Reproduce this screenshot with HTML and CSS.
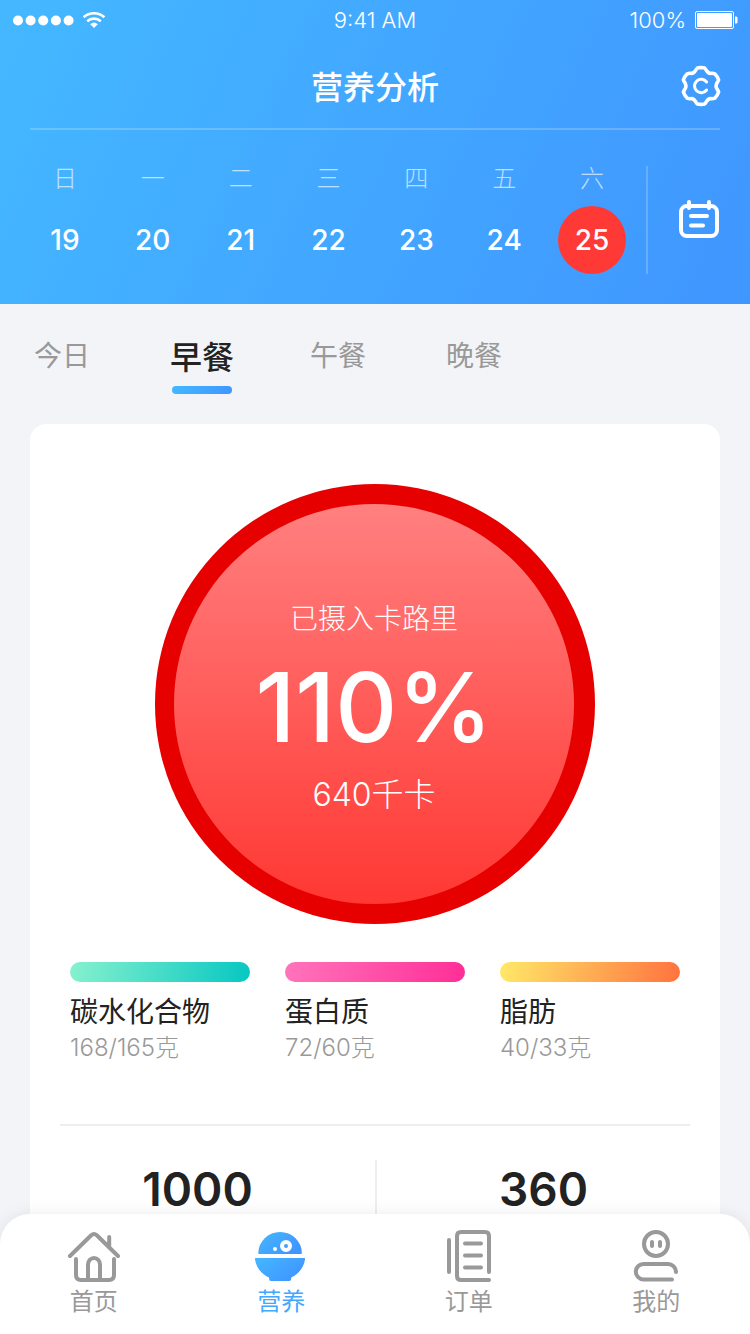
FILE: index.html
```html
<!DOCTYPE html>
<html lang="zh-CN">
<head>
<meta charset="utf-8">
<meta name="viewport" content="width=device-width, initial-scale=1">
<title>营养分析</title>
<link rel="stylesheet" href="styles.css">
</head>
<body>
<div class="app">
  <header class="header">
    <div class="status">
      <div class="status-left">
        <svg width="62" height="12" viewBox="0 0 62 12" fill="#fff" aria-hidden="true"><circle cx="6" cy="6.5" r="5"/><circle cx="18.6" cy="6.5" r="5"/><circle cx="31.2" cy="6.5" r="5"/><circle cx="43.9" cy="6.5" r="5"/><circle cx="56.6" cy="6.5" r="5"/></svg>
        <svg width="24" height="18" viewBox="0 0 24 18" aria-hidden="true"><g fill="none" stroke="#fff" stroke-width="2.6"><path d="M1.6 6.2a15.5 15.5 0 0 1 20.8 0"/><path d="M5.2 10.2a10.2 10.2 0 0 1 13.6 0"/></g><path fill="#fff" d="M8.2 13.2a5.8 5.8 0 0 1 7.6 0L12 17z"/></svg>
      </div>
      <span class="clock">9:41 AM</span>
      <div class="status-right">
        <span>100%</span>
        <svg width="44" height="18" viewBox="0 0 44 18" aria-hidden="true"><rect x="1.5" y=".5" width="38" height="17" rx="1.5" fill="none" stroke="#fff"/><rect x="3" y="2" width="35" height="14" rx="1" fill="#fff"/><path fill="#fff" d="M41 5.5h1.200q1.300 0 1.300 1.500v4q0 1.500-1.300 1.500H41z"/></svg>
      </div>
    </div>
    <div class="titlebar">
      <h1 class="title">营养分析</h1>
      <button class="icon-button settings" aria-label="设置">
        <svg width="48" height="48" viewBox="-24 -24 48 48" fill="none" stroke="#fff" stroke-width="3.6" stroke-linecap="round" stroke-linejoin="round"><path d="M-3.6-18Q-3-18.4 0-18.4T3.6-18C5.800-16 6-12.600 9.500-12.600Q12-13 13.800-12.200Q16.500-9.500 17.600-6C17.200-4 15-3 15 0S17.200 4 17.600 6Q16.500 9.500 13.800 12.200Q12 13 9.500 12.600C6 12.600 5.800 16 3.600 18Q3 18.400 0 18.400T-3.600 18C-5.800 16-6 12.600-9.500 12.600Q-12 13-13.800 12.200Q-16.500 9.500-17.600 6C-17.200 4-15 3-15 0S-17.200-4-17.600-6Q-16.500-9.500-13.800-12.200Q-12-13-9.500-12.600C-6-12.600-5.800-16-3.600-18Z"/><path stroke-width="3" d="M5.600-4A6.700 6.700 0 1 0 5.600 4"/></svg>
      </button>
    </div>
    <div class="week">
      <div class="days">
        <button class="day"><span class="day-name">日</span><span class="day-date">19</span></button>
        <button class="day"><span class="day-name">一</span><span class="day-date">20</span></button>
        <button class="day"><span class="day-name">二</span><span class="day-date">21</span></button>
        <button class="day"><span class="day-name">三</span><span class="day-date">22</span></button>
        <button class="day"><span class="day-name">四</span><span class="day-date">23</span></button>
        <button class="day"><span class="day-name">五</span><span class="day-date">24</span></button>
        <button class="day day-active"><span class="day-name">六</span><span class="day-date">25</span></button>
      </div>
      <button class="icon-button calendar" aria-label="日历">
        <svg width="40" height="40" viewBox="0 0 40 40" fill="none" stroke="#fff" stroke-width="4" stroke-linecap="round"><rect x="2" y="6" width="36" height="30" rx="6"/><path d="M10 2v6M30 2v6M12 16h16M12 25.500h12"/></svg>
      </button>
    </div>
  </header>

  <main class="content">
    <nav class="tabs">
      <button class="tab tab-first">今日</button>
      <button class="tab tab-active">早餐</button>
      <button class="tab">午餐</button>
      <button class="tab">晚餐</button>
    </nav>
    <section class="card">
      <div class="ring">
        <div class="disc">
          <span class="disc-label">已摄入卡路里</span>
          <strong class="disc-percent">110%</strong>
          <span class="disc-total">640千卡</span>
        </div>
      </div>
      <div class="nutrients">
        <div class="nutrient"><div class="bar bar-carb"></div><div class="nutrient-name">碳水化合物</div><div class="nutrient-value">168/165克</div></div>
        <div class="nutrient"><div class="bar bar-protein"></div><div class="nutrient-name">蛋白质</div><div class="nutrient-value">72/60克</div></div>
        <div class="nutrient"><div class="bar bar-fat"></div><div class="nutrient-name">脂肪</div><div class="nutrient-value">40/33克</div></div>
      </div>
      <div class="stats">
        <div class="stat">1000</div>
        <div class="stat">360</div>
      </div>
    </section>
  </main>

  <nav class="tabbar">
    <a class="tabbar-item" href="#home">
      <svg width="60" height="60" viewBox="0 0 60 60" fill="none" stroke="#999" stroke-width="4" stroke-linecap="round" stroke-linejoin="round" aria-hidden="true"><path d="M6 30 27.2 9.2Q30 6.8 32.8 9.2L54 30M45.2 11v9M12 33v16q0 5 5 5h28q5 0 5-5V33M24 54V38.500a6 6.500 0 0 1 12 0V54"/></svg>
      <span>首页</span>
    </a>
    <a class="tabbar-item tabbar-active" href="#nutrition">
      <svg width="60" height="60" viewBox="0 0 60 60" aria-hidden="true"><defs><linearGradient id="bowl" x1="0" y1="0" x2="1" y2=".6"><stop offset="0" stop-color="#44b8ff"/><stop offset="1" stop-color="#4096ff"/></linearGradient></defs><path fill="url(#bowl)" d="M8 28Q7.300 28 7.300 27.200A21.800 21.300 0 0 1 50.900 27.200Q50.900 28 50 28Z"/><path fill="url(#bowl)" d="M4.600 32H53.400Q54.300 32 54 33.500C52.500 43 46 49 40.200 51.500Q40.500 55 38.500 55H20Q18 55 18 51.500C12 49 5.500 43 4 33.500Q3.800 32 4.600 32Z"/><circle cx="35" cy="20" r="4" fill="none" stroke="#fff" stroke-width="4"/><circle cx="24" cy="23" r="2" fill="#fff"/></svg>
      <span>营养</span>
    </a>
    <a class="tabbar-item" href="#orders">
      <svg width="60" height="60" viewBox="0 0 60 60" fill="none" stroke="#999" stroke-width="4" stroke-linecap="round" stroke-linejoin="round" aria-hidden="true"><path d="M10 14v32M50 46V10q0-4-4-4H22q-4 0-4 4v40q0 4 4 4h28M26 17.500h16M26 29.500h16M26 41.500h16"/></svg>
      <span>订单</span>
    </a>
    <a class="tabbar-item" href="#mine">
      <svg width="60" height="60" viewBox="0 0 60 60" fill="none" stroke="#999" stroke-width="4" stroke-linecap="round" aria-hidden="true"><circle cx="30" cy="18" r="12"/><path d="M26 16v4M34 16v4M50 46A8 8 0 0 0 42 38H17.500a7.700 7.700 0 0 0 0 15.400H46"/></svg>
      <span>我的</span>
    </a>
  </nav>
</div>
</body>
</html>
```

FILE: styles.css
```css
* {
  box-sizing: border-box;
}

body {
  margin: 0;
  font-family: Inter, "Noto Sans CJK SC", sans-serif;
  color: #222;
  background: #f3f4f7;
}

button {
  padding: 0;
  border: 0;
  background: none;
  font: inherit;
  color: inherit;
  cursor: pointer;
}

svg {
  display: block;
}

.app {
  display: flex;
  flex-direction: column;
  height: 100vh;
}

/* Header */
.header {
  flex: none;
  color: #fff;
  background: linear-gradient(115deg, #44b8ff, #4096ff);
}

.status {
  display: grid;
  grid-template-columns: 1fr auto 1fr;
  align-items: center;
  height: 40px;
  padding: 0 12px;
  font-size: 22px;
  font-weight: 300;
}

.status-left,
.status-right {
  display: flex;
  align-items: center;
  gap: 8px;
}

.status-right {
  justify-content: flex-end;
}

.titlebar {
  display: grid;
  grid-template-columns: 48px 1fr 48px;
  align-items: center;
  height: 90px;
  margin: 0 30px;
  padding-top: 4px;
  border-bottom: 2px solid rgba(255, 255, 255, 0.2);
}

.title {
  grid-column: 2;
  margin: 0;
  padding-top: 4px;
  font-size: 32px;
  font-weight: 500;
  line-height: 48px;
  text-align: center;
}

.icon-button {
  display: flex;
  align-items: center;
  justify-content: center;
}

.settings {
  justify-content: flex-end;
  margin-right: -5px;
}

.week {
  display: flex;
  padding: 36px 0 30px 21px;
}

.days {
  flex: 1;
  display: grid;
  grid-template-columns: repeat(7, 1fr);
  padding-right: 10px;
  border-right: 2px solid rgba(255, 255, 255, 0.2);
}

.day {
  display: flex;
  flex-direction: column;
  align-items: center;
  gap: 14px;
}

.day-name {
  font-size: 24px;
  font-weight: 300;
  line-height: 26px;
  opacity: 0.65;
}

.day-date {
  width: 68px;
  border-radius: 50%;
  font-size: 28px;
  font-weight: 500;
  line-height: 68px;
  text-align: center;
}

.day-active .day-date {
  background: #ff3a36;
}

.calendar {
  width: 102px;
}

/* Scrolling content */
.content {
  flex: 1;
  min-height: 0;
  overflow-y: auto;
  scrollbar-width: none;
}

.tabs {
  display: grid;
  grid-template-columns: 100px repeat(3, 136px);
  align-items: start;
  height: 120px;
  padding: 32px 0 0 34px;
}

.tab {
  display: flex;
  flex-direction: column;
  align-items: center;
  color: #999;
  font-size: 28px;
  line-height: 40px;
}

.tab-first {
  align-items: flex-start;
}

.tab-active {
  gap: 6px;
  color: #222;
  font-size: 32px;
  font-weight: 500;
  line-height: 44px;
}

.tab-active::after {
  content: "";
  width: 60px;
  height: 8px;
  border-radius: 4px;
  background: linear-gradient(115deg, #44b8ff, #4096ff);
}

.card {
  margin: 0 30px;
  padding: 60px 0 150px;
  border-radius: 16px;
  background: #fff;
}

.ring {
  width: 440px;
  height: 440px;
  margin: 0 auto;
  padding: 20px 21px 20px 19px;
  border-radius: 50%;
  background: #e60000;
}

.disc {
  display: flex;
  flex-direction: column;
  align-items: center;
  justify-content: center;
  gap: 20px;
  height: 100%;
  padding-top: 6px;
  border-radius: 50%;
  color: #fff;
  background: linear-gradient(#ff8080, #ff3833);
  font-weight: 300;
}

.disc-label {
  font-size: 28px;
  line-height: 40px;
}

.disc-percent {
  font-size: 96px;
  font-weight: 500;
  line-height: 96px;
}

.disc-total {
  font-size: 32px;
  line-height: 40px;
}

.nutrients {
  display: flex;
  justify-content: space-between;
  margin: 38px 30px 0;
  padding: 0 10px 62px;
  border-bottom: 2px solid #eee;
}

.nutrient {
  width: 180px;
}

.bar {
  height: 20px;
  margin-bottom: 8px;
  border-radius: 10px;
}

.bar-carb {
  background: linear-gradient(100deg, #87f1ce, #06c7c2);
}

.bar-protein {
  background: linear-gradient(100deg, #ff74bb, #ff2e97);
}

.bar-fat {
  background: linear-gradient(100deg, #ffe968, #ff723f);
}

.nutrient-name {
  font-size: 28px;
  line-height: 44px;
}

.nutrient-value {
  color: #999;
  font-size: 24px;
  font-weight: 300;
  line-height: 28px;
}

.stats {
  display: grid;
  grid-template-columns: 1fr 1fr;
  margin-top: 34px;
}

.stat {
  padding-right: 10px;
  font-size: 46px;
  font-weight: 600;
  line-height: 58px;
  text-align: center;
}

.stat + .stat {
  border-left: 2px solid #eee;
}

/* Bottom bar, its rounded corners lie over the content */
.tabbar {
  position: relative;
  flex: none;
  display: grid;
  grid-template-columns: repeat(4, 1fr);
  height: 120px;
  margin-top: -30px;
  padding-top: 12px;
  border-radius: 30px 30px 0 0;
  background: #fff;
  box-shadow: 0 0 16px rgba(0, 0, 0, 0.08);
}

.tabbar-item {
  display: flex;
  flex-direction: column;
  align-items: center;
  color: #999;
  font-size: 24px;
  line-height: 32px;
  text-decoration: none;
}

.tabbar-active {
  color: #42a8ff;
}
```
